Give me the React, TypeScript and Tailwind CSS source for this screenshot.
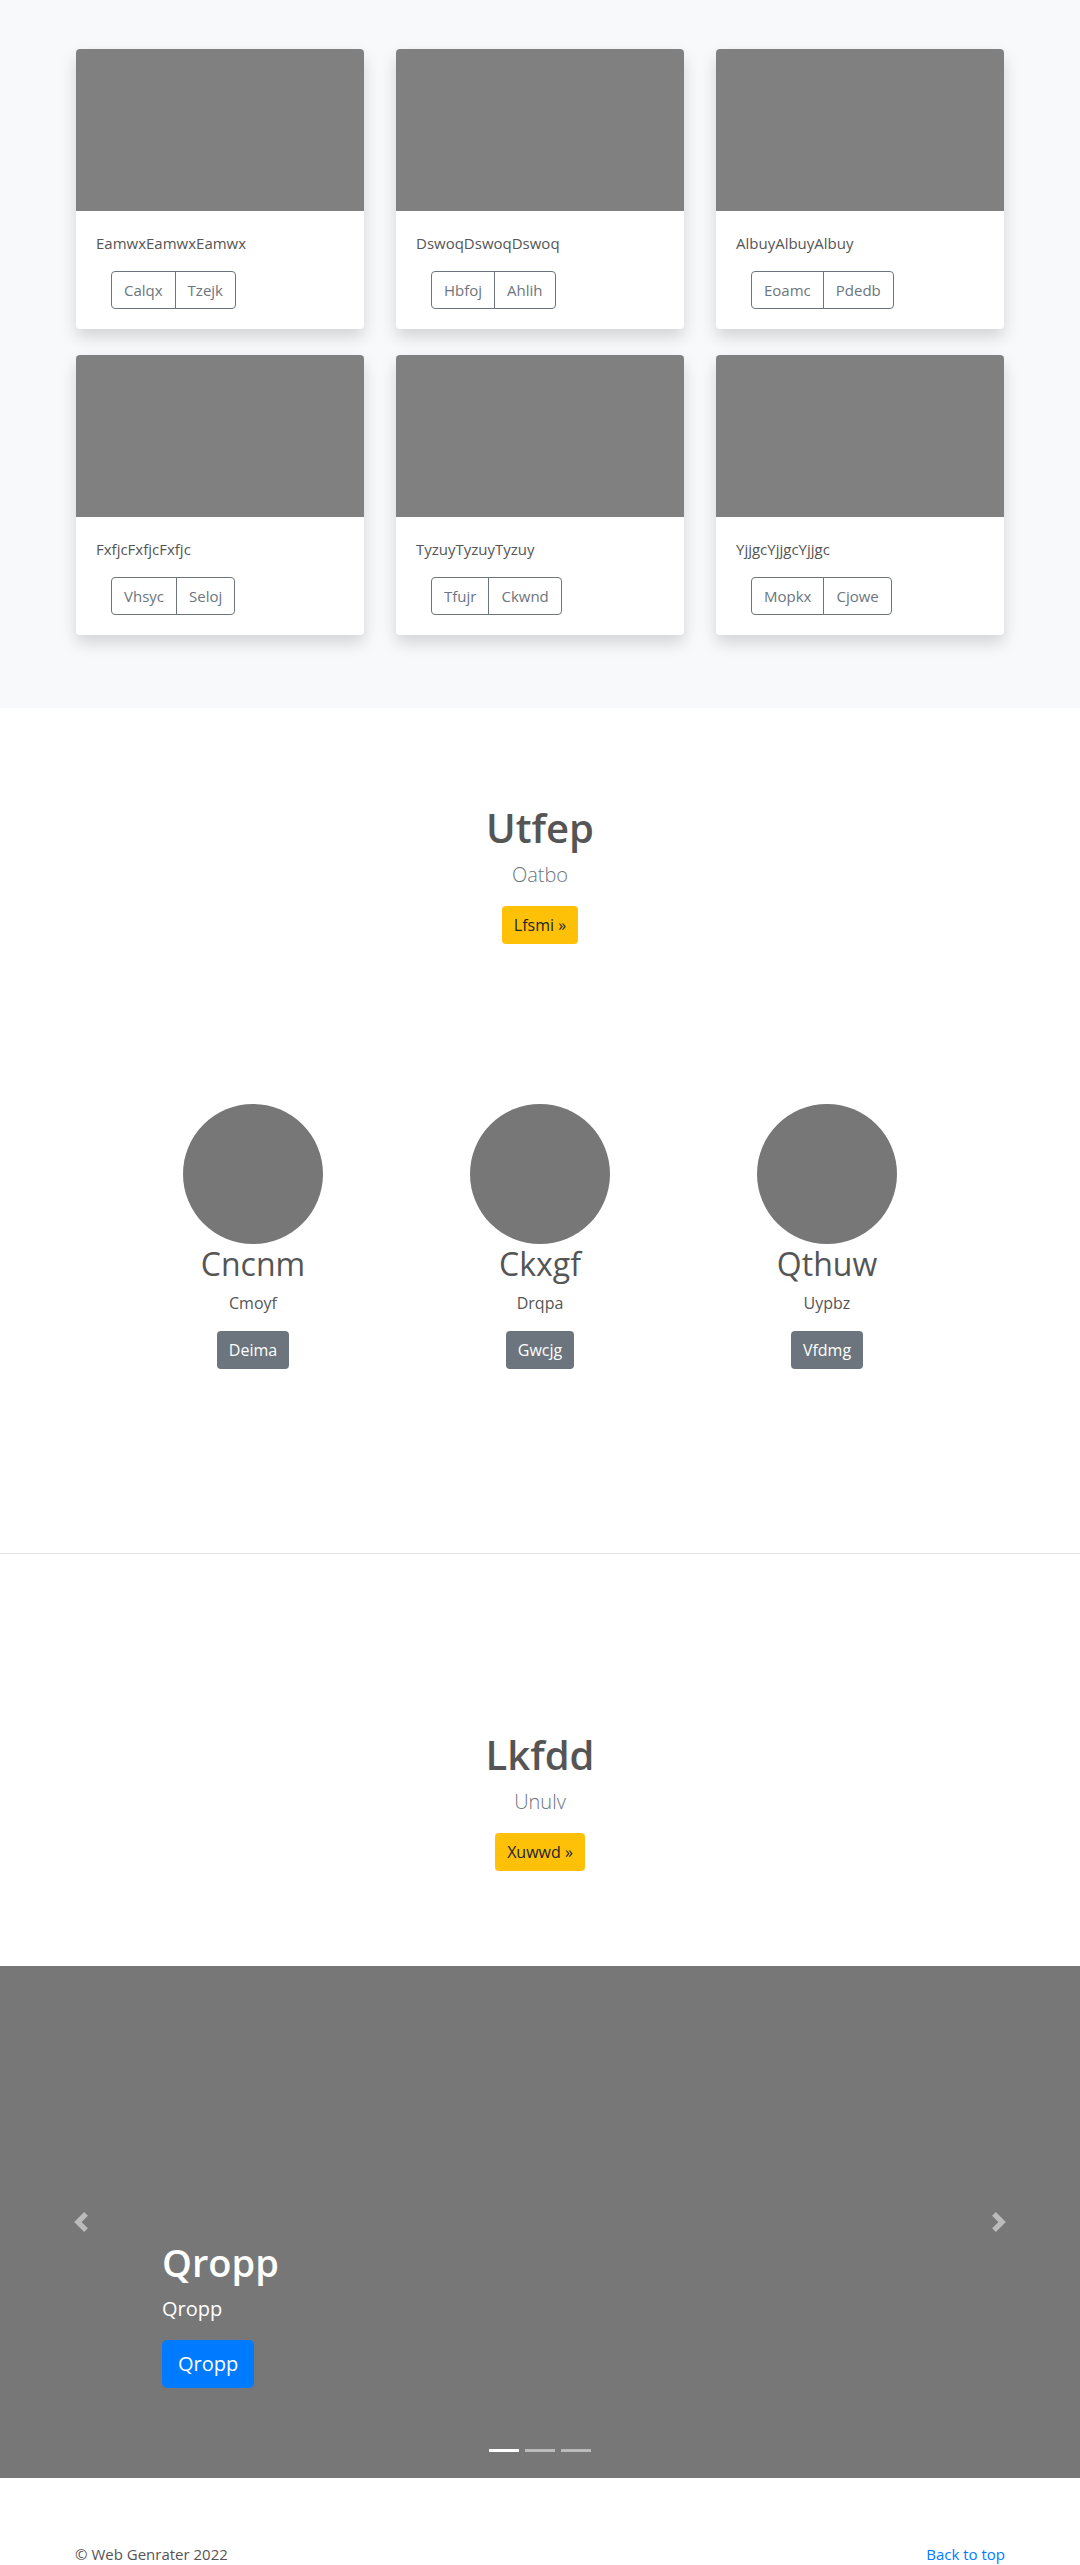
import React from "react";

const cards = [
  { title: "EamwxEamwxEamwx", a: "Calqx", b: "Tzejk" },
  { title: "DswoqDswoqDswoq", a: "Hbfoj", b: "Ahlih" },
  { title: "AlbuyAlbuyAlbuy", a: "Eoamc", b: "Pdedb" },
  { title: "FxfjcFxfjcFxfjc", a: "Vhsyc", b: "Seloj" },
  { title: "TyzuyTyzuyTyzuy", a: "Tfujr", b: "Ckwnd" },
  { title: "YjjgcYjjgcYjjgc", a: "Mopkx", b: "Cjowe" },
];

const people = [
  { name: "Cncnm", sub: "Cmoyf", btn: "Deima" },
  { name: "Ckxgf", sub: "Drqpa", btn: "Gwcjg" },
  { name: "Qthuw", sub: "Uypbz", btn: "Vfdmg" },
];

function Chevron({ dir }: { dir: "prev" | "next" }) {
  return (
    <svg width="20" height="20" viewBox="0 0 8 8" className="opacity-50">
      {dir === "prev" ? (
        <path fill="#fff" d="M5.25 0l-4 4 4 4 1.5-1.5L4.25 4l2.5-2.5L5.25 0z" />
      ) : (
        <path fill="#fff" d="M2.75 0l-1.5 1.5L3.75 4l-2.5 2.5L2.75 8l4-4-4-4z" />
      )}
    </svg>
  );
}

export default function App() {
  return (
    <div className="font-['Open_Sans',sans-serif] text-[#212529] bg-white">
      {/* Album */}
      <section className="bg-[#f8f9fa] pt-[49px] pb-[73px]">
        <div className="w-[928px] mx-auto grid grid-cols-3 gap-x-8 gap-y-[26px]">
          {cards.map((c) => (
            <div
              key={c.title}
              className="bg-white rounded-[4px] shadow-[0_8px_16px_rgba(0,0,0,0.15)] h-[280px] flex flex-col"
            >
              <div className="h-[162px] bg-[#808080] rounded-t-[4px]" />
              <div className="px-5 pt-5 pb-5">
                <p className="text-[15px] leading-6 text-[#555] mb-4">{c.title}</p>
                <div className="ml-[15px] inline-flex border border-[#6c757d] rounded-[4px] text-[#6c757d] text-[15px] leading-6">
                  <span className="px-3 py-[6px] border-r border-[#6c757d]">{c.a}</span>
                  <span className="px-3 py-[6px]">{c.b}</span>
                </div>
              </div>
            </div>
          ))}
        </div>
      </section>

      {/* Hero 1 */}
      <section className="pt-[96px] text-center">
        <h1 className="text-[40px] leading-[48px] font-semibold text-[#555] mb-2">Utfep</h1>
        <p className="text-[20px] leading-[30px] font-light text-[#6c757d] mb-4">Oatbo</p>
        <span className="inline-block bg-[#ffc107] text-[#212529] text-[16px] leading-6 px-3 py-[7px] rounded-[4px]">
          Lfsmi »
        </span>
      </section>

      {/* Marketing */}
      <section className="pt-[160px] pb-[184px]">
        <div className="w-[861px] mx-auto grid grid-cols-3">
          {people.map((p) => (
            <div key={p.name} className="flex flex-col items-center text-center">
              <div className="w-[140px] h-[140px] rounded-full bg-[#777]" />
              <h2 className="text-[32px] leading-[38px] font-normal text-[#555] mt-[1px] mb-2">{p.name}</h2>
              <p className="text-[16px] leading-6 text-[#555] mb-4">{p.sub}</p>
              <span className="inline-block bg-[#6c757d] text-white text-[16px] leading-6 px-3 py-[7px] rounded-[4px]">
                {p.btn}
              </span>
            </div>
          ))}
        </div>
      </section>

      <div className="border-t border-[#e5e5e5]" />

      {/* Hero 2 */}
      <section className="pt-[177px] pb-[95px] text-center">
        <h1 className="text-[40px] leading-[48px] font-semibold text-[#555] mb-2">Lkfdd</h1>
        <p className="text-[20px] leading-[30px] font-light text-[#6c757d] mb-4">Unulv</p>
        <span className="inline-block bg-[#ffc107] text-[#212529] text-[16px] leading-6 px-3 py-[7px] rounded-[4px]">
          Xuwwd »
        </span>
      </section>

      {/* Carousel */}
      <section className="relative h-[512px] bg-[#777]">
        <div className="absolute left-0 top-0 bottom-0 w-[15%] flex items-center justify-center">
          <Chevron dir="prev" />
        </div>
        <div className="absolute right-0 top-0 bottom-0 w-[15%] flex items-center justify-center">
          <Chevron dir="next" />
        </div>
        <div className="absolute left-[162px] bottom-[90px] text-white">
          <h1 className="text-[38px] leading-[48px] font-semibold mb-2">Qropp</h1>
          <p className="text-[20px] leading-[30px] mb-4">Qropp</p>
          <span className="inline-block bg-[#007bff] text-white text-[20px] leading-[30px] px-4 py-[9px] rounded-[5px]">
            Qropp
          </span>
        </div>
        <div className="absolute left-0 right-0 bottom-[26px] flex justify-center gap-[6px]">
          <span className="w-[30px] h-[3px] bg-white" />
          <span className="w-[30px] h-[3px] bg-white opacity-50" />
          <span className="w-[30px] h-[3px] bg-white opacity-50" />
        </div>
      </section>

      {/* Footer */}
      <footer className="pt-[64px] pb-[48px]">
        <div className="w-[930px] mx-auto flex justify-between text-[15px] leading-6">
          <p className="text-[#555]">© Web Genrater 2022</p>
          <a className="text-[#007bff]">Back to top</a>
        </div>
      </footer>
    </div>
  );
}
